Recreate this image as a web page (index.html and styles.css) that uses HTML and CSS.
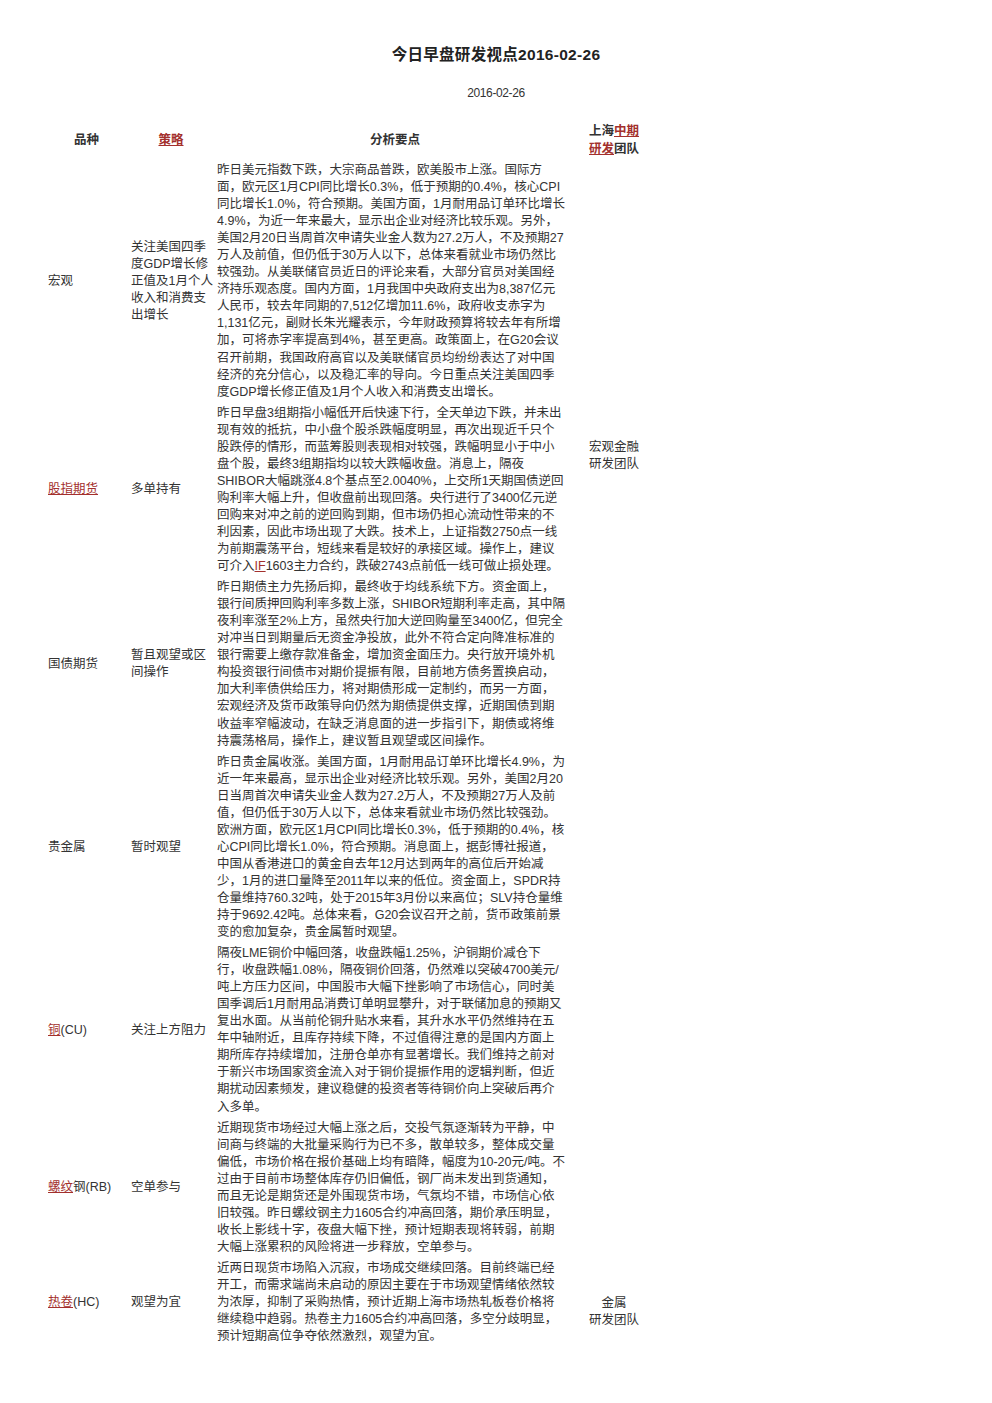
FILE: index.html
```html
<!DOCTYPE html>
<html lang="zh-CN">
<head>
<meta charset="utf-8">
<title>今日早盘研发视点2016-02-26</title>
<link rel="stylesheet" href="styles.css">
</head>
<body>
<div class="page">
  <h1 class="title">今日早盘研发视点2016-02-26</h1>
  <div class="date">2016-02-26</div>
  <table class="report">
    <colgroup>
      <col class="c-kind"><col class="c-strat"><col class="c-text"><col class="c-team">
    </colgroup>
    <thead>
      <tr>
        <th>品种</th>
        <th><a class="lk" href="#">策略</a></th>
        <th>分析要点</th>
        <th class="team">上海<a class="lk" href="#">中期</a><br><a class="lk" href="#">研发</a>团队</th>
      </tr>
    </thead>
    <tbody>
      <tr>
        <td>宏观</td>
        <td class="nw">关注美国四季<br>度GDP增长修<br>正值及1月个人<br>收入和消费支<br>出增长</td>
        <td class="txt">昨日美元指数下跌，大宗商品普跌，欧美股市上涨。国际方<br>面，欧元区1月CPI同比增长0.3%，低于预期的0.4%，核心CPI<br>同比增长1.0%，符合预期。美国方面，1月耐用品订单环比增长<br>4.9%，为近一年来最大，显示出企业对经济比较乐观。另外，<br>美国2月20日当周首次申请失业金人数为27.2万人，不及预期27<br>万人及前值，但仍低于30万人以下，总体来看就业市场仍然比<br>较强劲。从美联储官员近日的评论来看，大部分官员对美国经<br>济持乐观态度。国内方面，1月我国中央政府支出为8,387亿元<br>人民币，较去年同期的7,512亿增加11.6%，政府收支赤字为<br>1,131亿元，副财长朱光耀表示，今年财政预算将较去年有所增<br>加，可将赤字率提高到4%，甚至更高。政策面上，在G20会议<br>召开前期，我国政府高官以及美联储官员均纷纷表达了对中国<br>经济的充分信心，以及稳汇率的导向。今日重点关注美国四季<br>度GDP增长修正值及1月个人收入和消费支出增长。</td>
        <td class="team" rowspan="3">宏观金融<br>研发团队</td>
      </tr>
      <tr>
        <td><a class="lk" href="#">股指期货</a></td>
        <td class="nw">多单持有</td>
        <td class="txt">昨日早盘3组期指小幅低开后快速下行，全天单边下跌，并未出<br>现有效的抵抗，中小盘个股杀跌幅度明显，再次出现近千只个<br>股跌停的情形，而蓝筹股则表现相对较强，跌幅明显小于中小<br>盘个股，最终3组期指均以较大跌幅收盘。消息上，隔夜<br>SHIBOR大幅跳涨4.8个基点至2.0040%，上交所1天期国债逆回<br>购利率大幅上升，但收盘前出现回落。央行进行了3400亿元逆<br>回购来对冲之前的逆回购到期，但市场仍担心流动性带来的不<br>利因素，因此市场出现了大跌。技术上，上证指数2750点一线<br>为前期震荡平台，短线来看是较好的承接区域。操作上，建议<br>可介入<a class="lk" href="#">IF</a>1603主力合约，跌破2743点前低一线可做止损处理。</td>
      </tr>
      <tr>
        <td>国债期货</td>
        <td class="nw">暂且观望或区<br>间操作</td>
        <td class="txt">昨日期债主力先扬后抑，最终收于均线系统下方。资金面上，<br>银行间质押回购利率多数上涨，SHIBOR短期利率走高，其中隔<br>夜利率涨至2%上方，虽然央行加大逆回购量至3400亿，但完全<br>对冲当日到期量后无资金净投放，此外不符合定向降准标准的<br>银行需要上缴存款准备金，增加资金面压力。央行放开境外机<br>构投资银行间债市对期价提振有限，目前地方债务置换启动，<br>加大利率债供给压力，将对期债形成一定制约，而另一方面，<br>宏观经济及货币政策导向仍然为期债提供支撑，近期国债到期<br>收益率窄幅波动，在缺乏消息面的进一步指引下，期债或将维<br>持震荡格局，操作上，建议暂且观望或区间操作。</td>
      </tr>
      <tr>
        <td>贵金属</td>
        <td class="nw">暂时观望</td>
        <td class="txt">昨日贵金属收涨。美国方面，1月耐用品订单环比增长4.9%，为<br>近一年来最高，显示出企业对经济比较乐观。另外，美国2月20<br>日当周首次申请失业金人数为27.2万人，不及预期27万人及前<br>值，但仍低于30万人以下，总体来看就业市场仍然比较强劲。<br>欧洲方面，欧元区1月CPI同比增长0.3%，低于预期的0.4%，核<br>心CPI同比增长1.0%，符合预期。消息面上，据彭博社报道，<br>中国从香港进口的黄金自去年12月达到两年的高位后开始减<br>少，1月的进口量降至2011年以来的低位。资金面上，SPDR持<br>仓量维持760.32吨，处于2015年3月份以来高位；SLV持仓量维<br>持于9692.42吨。总体来看，G20会议召开之前，货币政策前景<br>变的愈加复杂，贵金属暂时观望。</td>
        <td class="team"></td>
      </tr>
      <tr>
        <td><a class="lk" href="#">铜</a>(CU)</td>
        <td class="nw">关注上方阻力</td>
        <td class="txt">隔夜LME铜价中幅回落，收盘跌幅1.25%，沪铜期价减仓下<br>行，收盘跌幅1.08%，隔夜铜价回落，仍然难以突破4700美元/<br>吨上方压力区间，中国股市大幅下挫影响了市场信心，同时美<br>国季调后1月耐用品消费订单明显攀升，对于联储加息的预期又<br>复出水面。从当前伦铜升贴水来看，其升水水平仍然维持在五<br>年中轴附近，且库存持续下降，不过值得注意的是国内方面上<br>期所库存持续增加，注册仓单亦有显著增长。我们维持之前对<br>于新兴市场国家资金流入对于铜价提振作用的逻辑判断，但近<br>期扰动因素频发，建议稳健的投资者等待铜价向上突破后再介<br>入多单。</td>
        <td class="team"></td>
      </tr>
      <tr>
        <td><a class="lk" href="#">螺纹</a>钢(RB)</td>
        <td class="nw">空单参与</td>
        <td class="txt">近期现货市场经过大幅上涨之后，交投气氛逐渐转为平静，中<br>间商与终端的大批量采购行为已不多，散单较多，整体成交量<br>偏低，市场价格在报价基础上均有暗降，幅度为10-20元/吨。不<br>过由于目前市场整体库存仍旧偏低，钢厂尚未发出到货通知，<br>而且无论是期货还是外围现货市场，气氛均不错，市场信心依<br>旧较强。昨日螺纹钢主力1605合约冲高回落，期价承压明显，<br>收长上影线十字，夜盘大幅下挫，预计短期表现将转弱，前期<br>大幅上涨累积的风险将进一步释放，空单参与。</td>
        <td class="team"></td>
      </tr>
      <tr>
        <td><a class="lk" href="#">热卷</a>(HC)</td>
        <td class="nw">观望为宜</td>
        <td class="txt">近两日现货市场陷入沉寂，市场成交继续回落。目前终端已经<br>开工，而需求端尚未启动的原因主要在于市场观望情绪依然较<br>为浓厚，抑制了采购热情，预计近期上海市场热轧板卷价格将<br>继续稳中趋弱。热卷主力1605合约冲高回落，多空分歧明显，<br>预计短期高位争夺依然激烈，观望为宜。</td>
        <td class="team team-low">金属<br>研发团队</td>
      </tr>
    </tbody>
  </table>
</div>
</body>
</html>
```

FILE: styles.css
```css
html, body {
  margin: 0;
  padding: 0;
  background: #ffffff;
}

body {
  font-family: "Liberation Sans", "Noto Sans CJK SC", sans-serif;
  color: #333333;
}

.page {
  padding-top: 45px;
}

.title {
  margin: 0;
  text-align: center;
  font-size: 15.5px;
  line-height: 20px;
  font-weight: bold;
  color: #222222;
  letter-spacing: 0.3px;
}

.date {
  margin-top: 20px;
  text-align: center;
  font-size: 12px;
  line-height: 16px;
  letter-spacing: -0.4px;
  color: #333333;
}

.report {
  margin-top: 19px;
  margin-left: 45px;
  border-collapse: collapse;
  table-layout: fixed;
  width: 607px;
  font-size: 12.5px;
  line-height: 17.05px;
}

.c-kind { width: 83px; }
.c-strat { width: 86px; }
.c-text { width: 362px; }
.c-team { width: 76px; }

.report th,
.report td {
  padding: 2px 3px;
  vertical-align: middle;
  text-align: left;
  font-weight: normal;
}

.report th {
  text-align: center;
  font-weight: bold;
  color: #333333;
  line-height: 18px;
}

.report td.txt,
.report td.nw {
  white-space: nowrap;
}

.report .team {
  text-align: center;
}

.report td.team-low {
  padding-top: 20px;
}

.lk {
  color: #a3302d;
  text-decoration: underline;
}
```
